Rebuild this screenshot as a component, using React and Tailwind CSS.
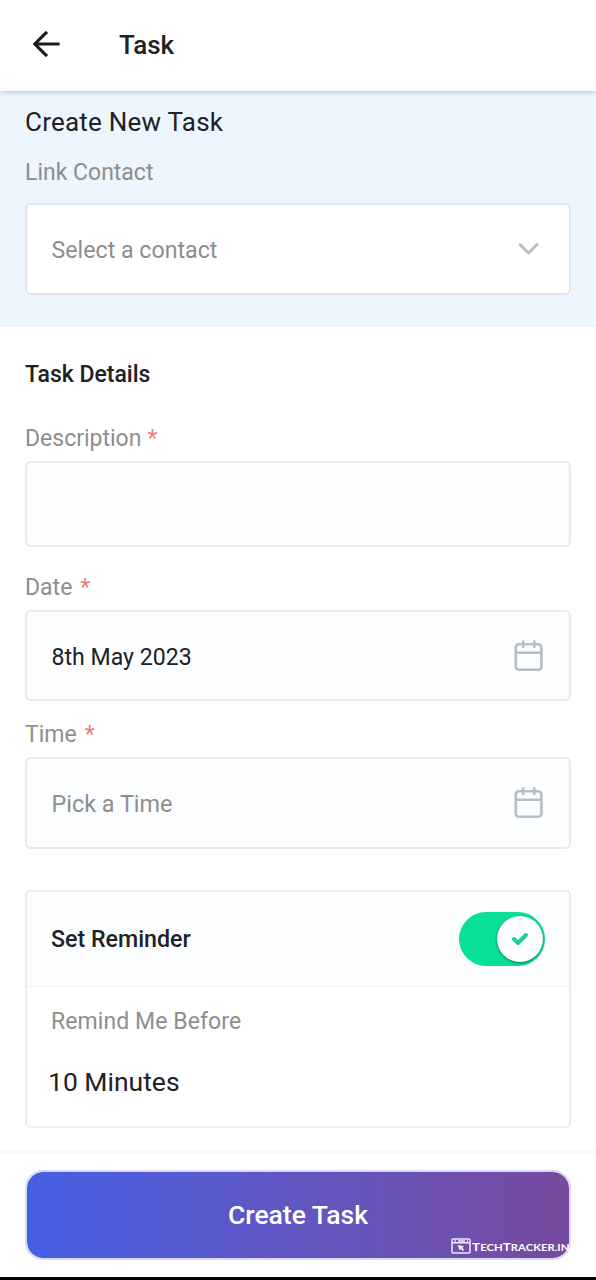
function BackArrow() {
  return (
    <svg className="relative -top-px" width="30" height="28" viewBox="0 0 30 28" fill="none" stroke="#1c1c1e" strokeWidth="3.1">
      <path d="M27.6 14H4M15 1.8L2.8 14L15 26.2" />
    </svg>
  );
}

function CalendarIcon() {
  return (
    <svg width="29" height="32" viewBox="0 0 29 32" fill="none" stroke="#b3bfc4" strokeWidth="2.6">
      <rect x="1.8" y="4.3" width="25.6" height="25.4" rx="3" />
      <path d="M1.8 12.8H27.4M9.2 0.6V7.9M20.3 0.6V7.9" />
    </svg>
  );
}

function Label({ text, gap }) {
  return (
    <div className="flex h-[28px] items-center text-[23px] leading-[28px] text-[#8e8e8e]">
      {text}
      <span className={gap ? "ml-[8px] text-[#e57f7c]" : "ml-[6px] text-[#e57f7c]"}>*</span>
    </div>
  );
}

const field = "flex items-center justify-between rounded-[6px] border-2 border-[#e4eaee] bg-[#fbfdff] pl-[24.5px] pr-[26px]";

export default function App() {
  return (
    <div className="flex h-[1280px] w-[596px] flex-col overflow-hidden bg-white font-['Roboto',sans-serif] text-[#202124]">
      <header className="relative z-10 flex h-[91px] shrink-0 items-center bg-white pb-[2px] pl-[32px] shadow-[0_1px_5px_rgba(60,70,90,0.28)]">
        <BackArrow />
        <h1 className="ml-[57px] text-[26px] font-medium leading-[30px]">Task</h1>
      </header>

      <section className="h-[236px] shrink-0 bg-[#edf5ff] px-[25px] pt-[15px]">
        <h2 className="h-[32px] text-[26px] leading-[32px] tracking-[0.23px]">Create New Task</h2>
        <p className="mt-[21px] h-[28px] text-[23px] leading-[28px] text-[#8e8e8e]">Link Contact</p>
        <div className="mt-[16px] flex h-[92px] items-center justify-between rounded-[6px] border-2 border-[#e1e5ee] bg-white pl-[24.5px] pr-[30px]">
          <span className="pt-[3px] text-[23.2px] text-[#8e8e8e]">Select a contact</span>
          <svg width="21" height="14" viewBox="0 0 21 14" fill="none" stroke="#b3bfc4" strokeWidth="2.8">
            <path d="M1.2 1.8L10.5 11L19.8 1.8" />
          </svg>
        </div>
      </section>

      <main className="flex h-[823px] shrink-0 flex-col px-[25px] pt-[34px]">
        <h3 className="h-[28px] text-[23px] font-medium leading-[28px]">Task Details</h3>
        <div className="mt-[36px]"><Label text="Description" /></div>
        <div className={`${field} mt-[8px] h-[86px] shrink-0`} />
        <div className="mt-[27px]"><Label text="Date" gap /></div>
        <div className={`${field} mt-[8px] h-[91px] shrink-0`}>
          <span className="pt-[4px] text-[23.1px] leading-[30px]">8th May 2023</span>
          <CalendarIcon />
        </div>
        <div className="mt-[20px]"><Label text="Time" gap /></div>
        <div className={`${field} mt-[8px] h-[92px] shrink-0`}>
          <span className="pt-[3px] text-[23.4px] text-[#8e8e8e]">Pick a Time</span>
          <CalendarIcon />
        </div>

        <div className="mt-[41px] h-[238px] shrink-0 overflow-hidden rounded-[5px] border-2 border-[#e9edf0]">
          <div className="flex h-[95px] items-center justify-between border-b border-[#edf2f5] bg-[#fbfdff] pl-[24px] pr-[24px]">
            <span className="text-[23.2px] font-medium">Set Reminder</span>
            <div className="flex h-[54px] w-[86px] items-center justify-end rounded-full bg-[#08df98] pr-[2px]">
              <div className="flex size-[46px] items-center justify-center rounded-full bg-white shadow-[0_1px_3px_rgba(0,70,50,0.65)]">
                <svg width="18" height="14" viewBox="0 0 18 14" fill="none" stroke="#1fcf95" strokeWidth="4" strokeLinecap="round" strokeLinejoin="round">
                  <path d="M3 7L7 11L15 3" />
                </svg>
              </div>
            </div>
          </div>
          <div className="pt-[21px]">
            <p className="pl-[24px] text-[23px] leading-[28px] tracking-[0.08px] text-[#8e8e8e]">Remind Me Before</p>
            <p className="mt-[30px] pl-[21px] text-[26.5px] leading-[32px]">10 Minutes</p>
          </div>
        </div>
      </main>

      <footer className="relative flex h-[127px] shrink-0 flex-col border-t-[3px] border-[#f8f8f9] px-[25px] pt-[17px]">
        <button className="h-[90px] w-full rounded-[18px] border-2 border-[#d9d7f6] bg-linear-to-r from-[#435fe4] to-[#764a9f] bg-clip-padding text-[26.5px] font-medium text-white">
          Create Task
        </button>
        <div className="absolute left-[451px] top-[84px] flex items-center text-white">
          <svg width="20" height="16" viewBox="0 0 20 16" fill="none" stroke="#eee9ff" strokeWidth="1.5">
            <rect x="1" y="1" width="18" height="14" rx="1" />
            <path d="M1 4.8H19M3.5 2.9H5M7 2.9H14M16 2.9H17" />
            <path d="M6.5 7L13 8.3L11.4 9.7L13.4 12L11.8 13L9.8 11L8.8 12.5Z" fill="#eee9ff" stroke="none" />
          </svg>
          <span className="ml-[1px] mt-[3px] origin-left scale-x-[1.13] whitespace-nowrap font-['Lato',sans-serif] text-[12px] font-bold leading-[14px]">
            T<span className="text-[10px]">ECH</span>T<span className="text-[10px]">RACKER.IN</span>
          </span>
        </div>
      </footer>
      <div className="h-[3px] shrink-0 bg-black" />
    </div>
  );
}
